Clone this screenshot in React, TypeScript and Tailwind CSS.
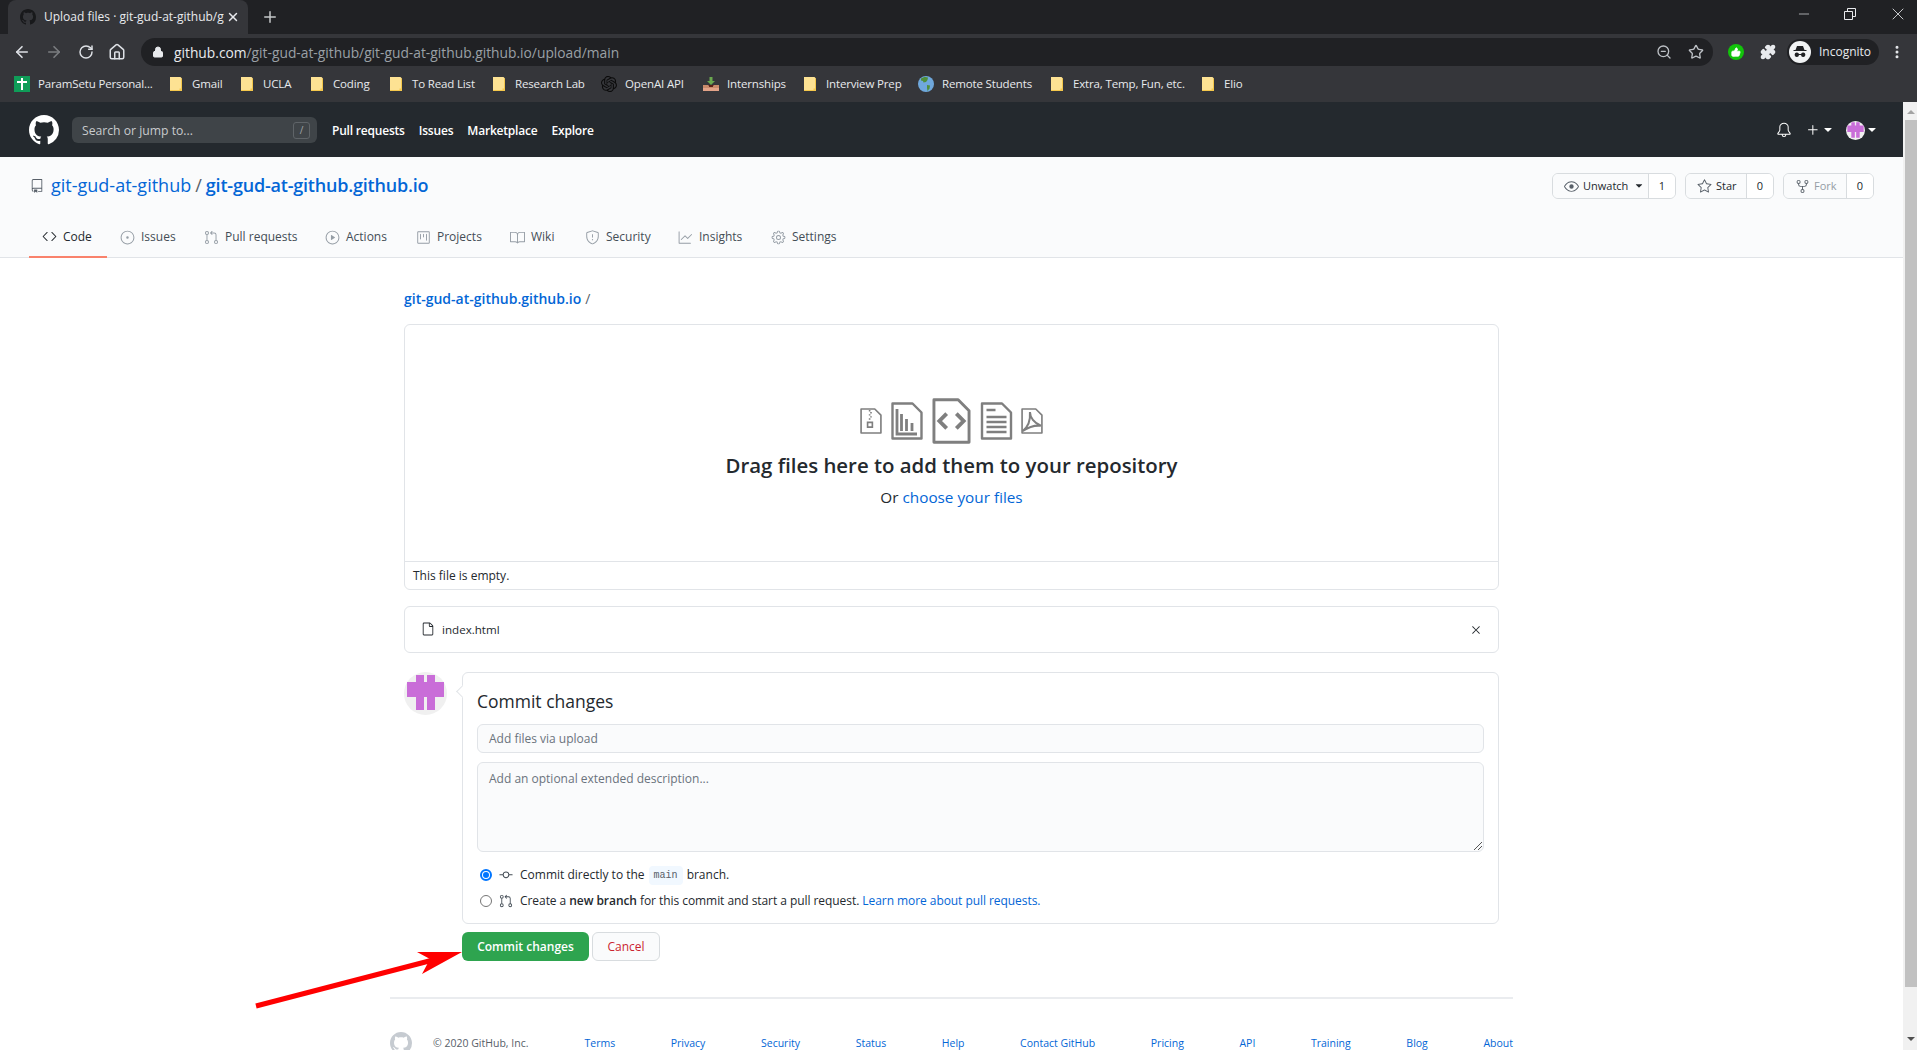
import { ArrowLeft, ArrowRight, Lock, Minus, MoreVertical, Plus, Puzzle, RotateCw, House, Star, ThumbsUp, X, ZoomOut } from "lucide-react";
import { GoBell, GoBook, GoCode, GoEye, GoFile, GoGear, GoGitCommit, GoGitPullRequest, GoGraph, GoIssueOpened, GoPlay, GoPlus, GoProject, GoRepo, GoRepoForked, GoShield, GoStar, GoTriangleDown, GoX } from "react-icons/go";
import { SiOpenai } from "react-icons/si";

const bookmarks = [
  { label: "ParamSetu Personal...", icon: "cross", width: "w-[156px]" },
  { label: "Gmail", icon: "folder", width: "w-[71px]" },
  { label: "UCLA", icon: "folder", width: "w-[70px]" },
  { label: "Coding", icon: "folder", width: "w-[79px]" },
  { label: "To Read List", icon: "folder", width: "w-[103px]" },
  { label: "Research Lab", icon: "folder", width: "w-[108px]" },
  { label: "OpenAI API", icon: "openai", width: "w-[102px]" },
  { label: "Internships", icon: "tray", width: "w-[101px]" },
  { label: "Interview Prep", icon: "folder", width: "w-[114px]" },
  { label: "Remote Students", icon: "globe", width: "w-[133px]" },
  { label: "Extra, Temp, Fun, etc.", icon: "folder", width: "w-[151px]" },
  { label: "Elio", icon: "folder", width: "w-[50px]" },
];

const tabs = [
  { label: "Code", Icon: GoCode, width: "w-[78px]", active: true },
  { label: "Issues", Icon: GoIssueOpened, width: "w-[84px]" },
  { label: "Pull requests", Icon: GoGitPullRequest, width: "w-[121px]" },
  { label: "Actions", Icon: GoPlay, width: "w-[91px]" },
  { label: "Projects", Icon: GoProject, width: "w-[94px]" },
  { label: "Wiki", Icon: GoBook, width: "w-[75px]" },
  { label: "Security", Icon: GoShield, width: "w-[93px]" },
  { label: "Insights", Icon: GoGraph, width: "w-[93px]" },
  { label: "Settings", Icon: GoGear, width: "w-[93px]" },
];

const footerLinks = ["Terms", "Privacy", "Security", "Status", "Help", "Contact GitHub", "Pricing", "API", "Training", "Blog", "About"];

function MarkGithub({ className }: { className: string }) {
  return (
    <svg className={className} viewBox="0 0 16 16" fill="currentColor">
      <path d="M8 0C3.58 0 0 3.58 0 8c0 3.54 2.29 6.53 5.47 7.59.4.07.55-.17.55-.38 0-.19-.01-.82-.01-1.49-2.01.37-2.53-.49-2.69-.94-.09-.23-.48-.94-.82-1.13-.28-.15-.68-.52-.01-.53.63-.01 1.08.58 1.23.82.72 1.21 1.87.87 2.33.66.07-.52.28-.87.51-1.07-1.78-.2-3.64-.89-3.64-3.95 0-.87.31-1.59.82-2.15-.08-.2-.36-1.02.08-2.12 0 0 .67-.21 2.2.82.64-.18 1.32-.27 2-.27.68 0 1.36.09 2 .27 1.53-1.04 2.2-.82 2.2-.82.44 1.1.16 1.92.08 2.12.51.56.82 1.27.82 2.15 0 3.07-1.87 3.75-3.65 3.95.29.25.54.73.54 1.48 0 1.07-.01 1.93-.01 2.2 0 .21.15.46.55.38A8.013 8.013 0 0016 8c0-4.42-3.58-8-8-8z" />
    </svg>
  );
}

function BookmarkIcon({ kind }: { kind: string }) {
  if (kind === "cross") {
    return (
      <span className="flex h-4 w-4 items-center justify-center bg-[#0f9d58]">
        <svg width="12" height="14" viewBox="0 0 12 14">
          <path d="M5 1h2v3h4v2H7v7H5V6H1V4h4z" fill="#fff" />
        </svg>
      </span>
    );
  }
  if (kind === "openai") {
    return <SiOpenai className="h-4 w-4 text-[#0b0b0b]" />;
  }
  if (kind === "tray") {
    return (
      <svg width="16" height="16" viewBox="0 0 16 16">
        <path d="M6.5 1h3v4H12L8 9 4 5h2.5z" fill="#6aa84f" />
        <path d="M0 9h5.5l1 2h3l1-2H16v3H0z" fill="#c98a6b" />
        <path d="M0 12h16v3H0z" fill="#e3a388" />
        <path d="M5.5 9h5l-1 2h-3z" fill="#5b1f14" />
      </svg>
    );
  }
  if (kind === "globe") {
    return (
      <svg width="16" height="16" viewBox="0 0 16 16">
        <circle cx="8" cy="8" r="8" fill="#6fa8dc" />
        <path d="M3 2.5C5 1 8 .5 10 1.5L9.5 4 8 6 5.5 6.5 5 5 3 4.5z" fill="#4f8f3a" />
        <path d="M9 9l3 .5-.5 3L9.5 15 9 12z" fill="#4f8f3a" />
      </svg>
    );
  }
  return (
    <svg width="12" height="14" viewBox="0 0 12 14">
      <path d="M0 0h10.5l1.5 1.5V14H0z" fill="#fde293" />
      <path d="M11 1.5h1V14H0v-1h9.5v-1.5H11z" fill="#f5c84c" />
    </svg>
  );
}

function Identicon({ size }: { size: string }) {
  return (
    <svg className={size} viewBox="0 0 43 43">
      <circle cx="21.5" cy="21.5" r="21.5" fill="#f0f0f0" />
      <path d="M12 3h8v7h3V3h8v7h9v15h-9v13h-8V25h-3v13h-8V25H3V10h9z" fill="#c96dd8" />
    </svg>
  );
}

function FileOutline({ className, children }: { className: string; children: React.ReactNode }) {
  return (
    <svg className={className} viewBox="0 0 32 38" fill="none">
      <path d="M1.5 1.5h20l9 9v26h-29z" stroke="#7f7f7f" strokeWidth="2.4" strokeLinejoin="round" />
      {children}
    </svg>
  );
}

function ChromeBar() {
  return (
    <div className="shrink-0 text-[#e8eaed]">
      <div className="flex h-[34px] items-end bg-[#202124] pl-[8px]">
        <div className="flex h-[34px] w-[240px] items-center rounded-t-[8px] bg-[#35363a] pl-[12px]">
          <MarkGithub className="h-4 w-4 shrink-0 text-[#18191b]" />
          <span className="ml-[8px] w-[180px] overflow-hidden whitespace-nowrap text-[12px]">Upload files · git-gud-at-github/git-gud</span>
          <X className="ml-[2px] h-[14px] w-[14px]" strokeWidth={2.5} />
        </div>
        <Plus className="mb-[8px] ml-[13px] h-[18px] w-[18px] text-[#c4c7c9]" />
        <div className="mb-[10px] ml-auto flex items-center gap-[30px] pr-[9px]">
          <Minus className="h-4 w-4" strokeWidth={1} />
          <svg width="16" height="16" viewBox="0 0 16 16" fill="none" stroke="#e8eaed">
            <path d="M2.5 5.5h8v8h-8zM5.5 5V2.5h8v8H11" />
          </svg>
          <X className="h-5 w-5" strokeWidth={1} />
        </div>
      </div>
      <div className="flex h-[32px] items-start bg-[#35363a] pt-[4px]">
        <div className="flex h-[28px] w-[141px] shrink-0 items-center pl-[13px] text-[#dee1e6]">
          <ArrowLeft className="h-[18px] w-[18px]" strokeWidth={2.2} />
          <ArrowRight className="ml-[14px] h-[18px] w-[18px] text-[#7b7d80]" strokeWidth={2.2} />
          <RotateCw className="ml-[15px] h-[16px] w-[16px]" strokeWidth={2.2} />
          <House className="ml-[14px] h-[18px] w-[18px]" strokeWidth={2} />
        </div>
        <div className="flex h-[28px] w-[1572px] items-center rounded-full bg-[#202124] pl-[11px] pr-[9px]">
          <Lock className="h-[12px] w-[12px] fill-[#e8eaed]" />
          <span className="ml-[10px] whitespace-nowrap pt-[2px] text-[13.8px]">
            github.com<span className="text-[#9aa0a6]">/git-gud-at-github/git-gud-at-github.github.io/upload/main</span>
          </span>
          <ZoomOut className="ml-auto h-[16px] w-[16px] text-[#bdc1c6]" />
          <Star className="ml-[16px] h-[16px] w-[16px] text-[#bdc1c6]" />
        </div>
        <span className="ml-[15px] mt-[6px] flex h-4 w-4 items-center justify-center rounded-full bg-[#12c40a]">
          <ThumbsUp className="h-[10px] w-[10px] fill-white text-white" />
        </span>
        <Puzzle className="ml-[16px] mt-[6px] h-[16px] w-[16px] fill-[#e8eaed]" />
        <div className="ml-[11px] mt-[1px] flex h-[26px] w-[92px] items-center rounded-full bg-[#202124] pl-[2px]">
          <span className="flex h-[22px] w-[22px] items-center justify-center rounded-full bg-[#f1f3f4]">
            <svg width="16" height="16" viewBox="0 0 16 16" fill="#202124">
              <path d="M5 2h6l1.5 4h2v1h-13V6h2z" />
              <path d="M5 8.5a2.2 2.2 0 102 2.5h2a2.2 2.2 0 102-2.5 2.2 2.2 0 00-2 1.5H7a2.2 2.2 0 00-2-1.5z" fillRule="evenodd" />
            </svg>
          </span>
          <span className="ml-[8px] text-[12px]">Incognito</span>
        </div>
        <MoreVertical className="ml-[10px] mt-[6px] h-[16px] w-[16px]" strokeWidth={2.5} />
      </div>
      <div className="flex h-[36px] items-center bg-[#35363a] pl-[14px]">
        {bookmarks.map((bookmark) => (
          <div key={bookmark.label} className={`flex shrink-0 items-center ${bookmark.width}`}>
            <BookmarkIcon kind={bookmark.icon} />
            <span className={`whitespace-nowrap text-[11.5px] tracking-[-0.15px] ${bookmark.icon === "folder" ? "ml-[10px]" : "ml-[8px]"}`}>{bookmark.label}</span>
          </div>
        ))}
      </div>
    </div>
  );
}

function GithubHeader() {
  return (
    <header className="flex h-[55px] shrink-0 items-center bg-[#24292e] pl-[29px] pr-[24px] pt-[1px] text-white">
      <MarkGithub className="h-[30px] w-[30px]" />
      <div className="ml-[13px] flex h-[26px] w-[245px] items-center justify-between rounded-[6px] bg-[#3f4448] pl-[10px] pr-[7px]">
        <span className="pt-[2px] text-[12.2px] text-[#c8cbcd]">Search or jump to...</span>
        <span className="flex h-[17px] w-[17px] items-center justify-center rounded-[3px] border border-[#5f6468] text-[10px] text-[#a0a4a7]">/</span>
      </div>
      <nav className="ml-[15px] flex gap-[14px] pt-[2px] text-[12px] font-semibold tracking-[-0.2px]">
        <span>Pull requests</span>
        <span>Issues</span>
        <span>Marketplace</span>
        <span>Explore</span>
      </nav>
      <div className="ml-auto flex items-center">
        <GoBell className="h-[16px] w-[16px]" />
        <GoPlus className="ml-[13px] h-[16px] w-[16px]" />
        <GoTriangleDown className="h-[14px] w-[14px]" />
        <Identicon size="ml-[11px] h-[19px] w-[19px]" />
        <GoTriangleDown className="h-[14px] w-[14px]" />
      </div>
    </header>
  );
}

function RepoButton({ Icon, label, count, width, muted, caret }: { Icon: typeof GoEye; label: string; count: string; width: string; muted?: boolean; caret?: boolean }) {
  return (
    <div className="flex h-[26px] overflow-hidden rounded-[6px] border border-[#d8dcdf] text-[11px] text-[#24292e]">
      <div className={`flex items-center gap-[4px] bg-[#fafbfc] pl-[11px] ${width} ${muted ? "text-[#959da5]" : ""}`}>
        <Icon className="h-[15px] w-[15px] text-[#586069]" />
        <span>{label}</span>
        {caret && <GoTriangleDown className="ml-[1px] h-[12px] w-[12px]" />}
      </div>
      <div className="flex w-[27px] items-center justify-center border-l border-[#d8dcdf] bg-white">{count}</div>
    </div>
  );
}

function RepoHead() {
  return (
    <div className="h-[101px] shrink-0 border-b border-[#e1e4e8] bg-[#fafbfc]">
      <div className="flex items-center pl-[30px] pr-[29px] pt-[16px]">
        <GoRepo className="h-[14px] w-[14px] text-[#586069]" />
        <div className="-mt-[2px] ml-[7px] flex items-baseline text-[18px] text-[#0366d6]">
          <span>git-gud-at-github</span>
          <span className="mx-[4px] text-[#586069]">/</span>
          <span className="font-semibold tracking-[-0.2px]">git-gud-at-github.github.io</span>
        </div>
        <div className="ml-auto flex gap-[9px]">
          <RepoButton Icon={GoEye} label="Unwatch" count="1" width="w-[95px]" caret />
          <RepoButton Icon={GoStar} label="Star" count="0" width="w-[60px]" />
          <RepoButton Icon={GoRepoForked} label="Fork" count="0" width="w-[62px]" muted />
        </div>
      </div>
      <nav className="ml-[29px] mt-[16px] flex h-[42px]">
        {tabs.map(({ label, Icon, width, active }) => (
          <div key={label} className={`flex items-center gap-[6px] pl-[13px] pt-[2px] text-[12px] ${width} ${active ? "h-[43px] border-b-2 border-[#f9826c] text-[#24292e]" : "h-[42px] text-[#444d56]"}`}>
            <Icon className={`h-[15px] w-[15px] ${active ? "text-[#24292e]" : "text-[#959da5]"}`} />
            <span>{label}</span>
          </div>
        ))}
      </nav>
    </div>
  );
}

function DropBox() {
  return (
    <div className="mt-[15px] h-[266px] rounded-[6px] border border-[#e1e4e8]">
      <div className="flex h-[237px] flex-col items-center border-b border-[#e1e4e8] pt-[73px]">
        <div className="flex h-[46px] items-center">
          <FileOutline className="h-[26px] w-[22px]">
            <path d="M14 3v2M16 6v2M14 9v2M16 12v2M14 15v2M11 21h7v7h-7z" stroke="#7f7f7f" strokeWidth="2.4" />
          </FileOutline>
          <FileOutline className="ml-[9px] h-[38px] w-[32px]">
            <path d="M6 7v25h20M10.500 12v17M15.500 17v12M21 21v8" stroke="#7f7f7f" strokeWidth="2.8" />
          </FileOutline>
          <FileOutline className="ml-[9px] h-[46px] w-[39px]">
            <path d="M12 14l-6 6 6 6M20 14l6 6-6 6" stroke="#7f7f7f" strokeWidth="3.2" transform="translate(0 -1)" />
          </FileOutline>
          <FileOutline className="ml-[9px] h-[38px] w-[33px]">
            <path d="M6 8h9M6 15h20M6 20h20M6 25h20M6 30h20" stroke="#7f7f7f" strokeWidth="2.4" />
          </FileOutline>
          <FileOutline className="ml-[8px] h-[26px] w-[22px]">
            <path d="M2 34c8-6 12-16 11-28 0 8 6 16 16 20-8-1-18 2-27 8z" stroke="#7f7f7f" strokeWidth="3" />
          </FileOutline>
        </div>
        <h2 className="mt-[6px] text-[20.4px] font-semibold leading-[30px] text-[#24292e]">Drag files here to add them to your repository</h2>
        <p className="mt-[5px] text-[15.3px] leading-[24px] text-[#24292e]">
          Or <span className="text-[#0366d6]">choose your files</span>
        </p>
      </div>
      <p className="pl-[8px] text-[12px] leading-[28px] text-[#24292e]">This file is empty.</p>
    </div>
  );
}

function CommitForm() {
  return (
    <div className="mt-[19px] flex">
      <Identicon size="h-[43px] w-[43px] shrink-0" />
      <div className="relative ml-[15px] h-[252px] flex-1 rounded-[6px] border border-[#e1e4e8] px-[14px] pt-[16px]">
        <span className="absolute -left-[5px] top-[14px] h-[9px] w-[9px] rotate-45 border-b border-l border-[#e1e4e8] bg-white" />
        <h3 className="text-[17.5px] font-medium leading-[24px] text-[#24292e]">Commit changes</h3>
        <div className="mt-[11px] flex h-[29px] items-center rounded-[6px] border border-[#e1e4e8] bg-[#fafbfc] pl-[11px] text-[12px] text-[#6a737d]">Add files via upload</div>
        <div className="relative mt-[9px] h-[90px] rounded-[6px] border border-[#e1e4e8] bg-[#fafbfc] pl-[11px] pt-[7px] text-[12px] text-[#6a737d]">
          Add an optional extended description...
          <svg className="absolute bottom-[1px] right-[1px]" width="9" height="9" viewBox="0 0 9 9" stroke="#555">
            <path d="M1 9l8-8M5 9l4-4" />
          </svg>
        </div>
        <div className="mt-[13px] flex h-[20px] items-center text-[12px] text-[#24292e]">
          <span className="ml-[3px] flex h-[12px] w-[12px] items-center justify-center rounded-full border-2 border-[#0075ff] bg-white">
            <span className="h-[6px] w-[6px] rounded-full bg-[#0075ff]" />
          </span>
          <GoGitCommit className="ml-[6px] h-[16px] w-[16px] text-[#444d56]" />
          <span className="ml-[6px]">Commit directly to the</span>
          <code className="mx-[4px] rounded-[4px] bg-[#f1f8ff] px-[5px] py-[2px] font-['Liberation_Mono',monospace] text-[10px] text-[#586069]">main</code>
          <span>branch.</span>
        </div>
        <div className="mt-[6px] flex h-[20px] items-center text-[12px] text-[#24292e]">
          <span className="ml-[3px] h-[12px] w-[12px] rounded-full border border-[#767676] bg-white" />
          <GoGitPullRequest className="ml-[7px] h-[14px] w-[14px] text-[#444d56]" />
          <span className="ml-[7px] tracking-[-0.06px]">
            Create a <span className="font-semibold">new branch</span> for this commit and start a pull request. <span className="text-[#0366d6]">Learn more about pull requests.</span>
          </span>
        </div>
      </div>
    </div>
  );
}

function Footer() {
  return (
    <footer className="mx-auto mt-[36px] w-[1123px] border-t-2 border-[#eaecef] pt-[33px]">
      <div className="flex items-center text-[10.5px] leading-[12px]">
        <MarkGithub className="h-[22px] w-[22px] shrink-0 text-[#c6cbd1]" />
        <span className="ml-[21px] text-[#586069]">© 2020 GitHub, Inc.</span>
        <div className="ml-[56px] flex flex-1 justify-between text-[#0366d6]">
          {footerLinks.map((link) => (
            <span key={link}>{link}</span>
          ))}
        </div>
      </div>
    </footer>
  );
}

export default function App() {
  return (
    <div className="relative flex h-[1050px] w-[1917px] flex-col overflow-hidden bg-white font-['Open_Sans',sans-serif]">
      <ChromeBar />
      <div className="flex min-h-0 flex-1">
        <div className="flex w-[1903px] flex-col">
          <GithubHeader />
          <RepoHead />
          <main className="mx-auto w-[1095px]">
            <div className="flex h-[51px] items-center pt-[29px] text-[14px]">
              <span className="font-semibold text-[#0366d6]">git-gud-at-github.github.io</span>
              <span className="ml-[4px] text-[#586069]">/</span>
            </div>
            <DropBox />
            <div className="mt-[16px] flex h-[47px] items-center justify-between rounded-[6px] border border-[#e1e4e8] pl-[16px] pr-[15px] text-[11.6px] text-[#24292e]">
              <div className="flex items-center gap-[7px]">
                <GoFile className="h-[14px] w-[14px]" />
                <span>index.html</span>
              </div>
              <GoX className="h-[14px] w-[14px]" />
            </div>
            <CommitForm />
            <div className="ml-[58px] mt-[8px] flex gap-[3px] text-[12px]">
              <button className="h-[29px] w-[127px] rounded-[6px] bg-[#2ea44f] font-semibold text-white">Commit changes</button>
              <button className="h-[29px] w-[68px] rounded-[6px] border border-[#d8dcdf] bg-[#fafbfc] font-medium text-[#cb2431]">Cancel</button>
            </div>
          </main>
          <Footer />
        </div>
        <div className="flex w-[14px] flex-col items-center bg-[#f1f1f1] pl-[2px]">
          <span className="mt-[8px] h-0 w-0 border-x-[4px] border-b-[4px] border-x-transparent border-b-[#a3a3a3]" />
          <div className="mt-[6px] h-[867px] w-full bg-[#c1c1c1]" />
          <span className="mt-[50px] h-0 w-0 border-x-[4px] border-t-[4px] border-x-transparent border-t-[#505050]" />
        </div>
      </div>
      <svg className="absolute left-[250px] top-[945px]" width="215" height="65" viewBox="0 0 215 65">
        <path d="M6 61L183 15" stroke="#ff0000" strokeWidth="5" />
        <path d="M167 7h45L172 29l8-15z" fill="#ff0000" />
      </svg>
    </div>
  );
}
